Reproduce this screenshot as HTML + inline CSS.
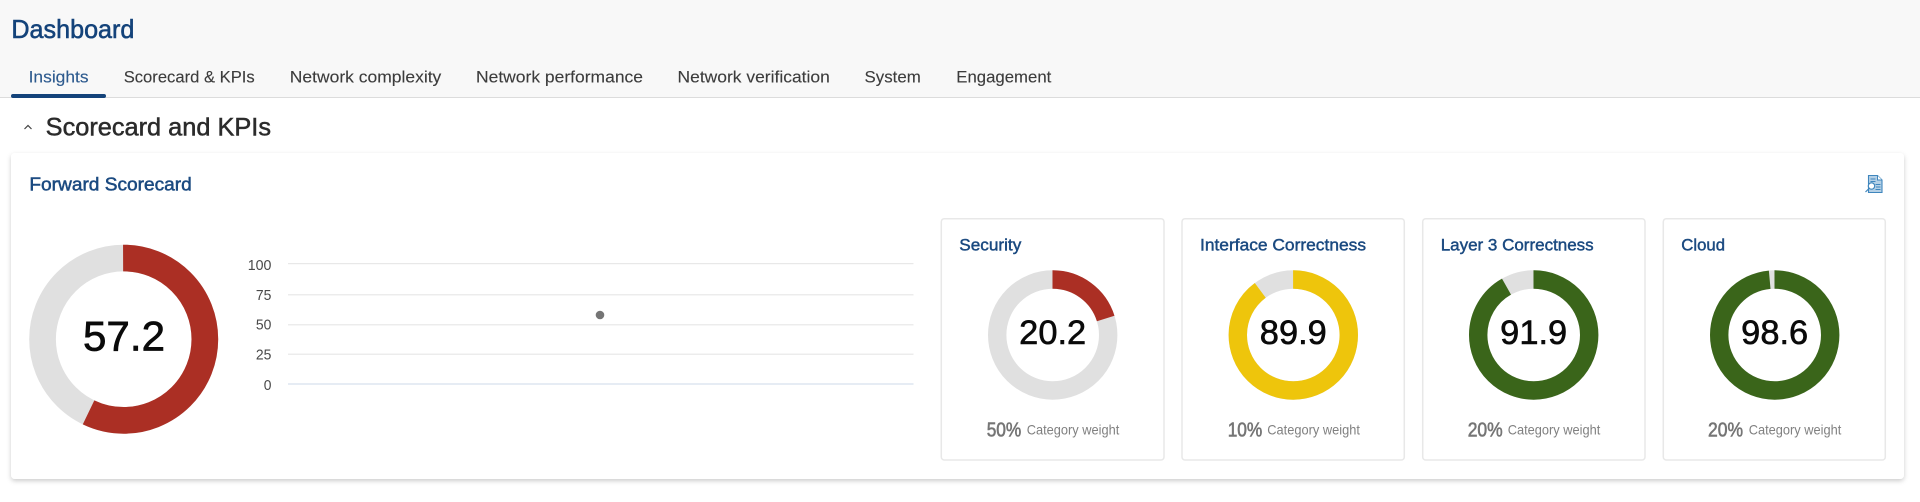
<!DOCTYPE html>
<html lang="en">
<head>
<meta charset="utf-8">
<title>Dashboard</title>
<style>
html,body{margin:0;padding:0;width:1920px;height:502px;overflow:hidden;background:#fff}
svg{display:block;position:absolute;left:0;top:0}
text{font-family:"Liberation Sans",sans-serif}
.tab{font-size:17px;fill:#3c3c3c;stroke:#3c3c3c;stroke-width:.12}
.title{font-size:17px;fill:#1b4a80;stroke:#1b4a80;stroke-width:.45}
.ax{font-size:15px;fill:#4a4a4a;text-anchor:end}
.pct{font-size:20px;fill:#757575;stroke:#757575;stroke-width:.6}
.cw{font-size:14px;fill:#808080}
.val{font-size:34px;fill:#0a0a0a;text-anchor:middle;stroke:#0a0a0a;stroke-width:.6}
.sub{fill:#fff;stroke:#e8e8e8;stroke-width:1.5}
</style>
</head>
<body>
<svg width="1920" height="502" viewBox="0 0 1920 502" xmlns="http://www.w3.org/2000/svg">
<defs>
<filter id="sh" x="-2%" y="-5%" width="104%" height="112%">
<feDropShadow dx="0" dy="2" stdDeviation="2.5" flood-color="#000" flood-opacity=".2"/>
</filter>
</defs>

<rect x="0" y="0" width="1920" height="97.5" fill="#f8f8f8"/>
<rect x="0" y="97" width="1920" height="1" fill="#dcdcdc"/>

<text x="11.4" y="38" font-size="26" fill="#14437a" textLength="123" lengthAdjust="spacingAndGlyphs" stroke="#14437a" stroke-width=".55">Dashboard</text>

<text class="tab" x="28.6" y="82.5" style="fill:#2d5a8e;stroke:#2d5a8e" textLength="60" lengthAdjust="spacingAndGlyphs">Insights</text>
<text class="tab" x="123.7" y="82.5" textLength="131" lengthAdjust="spacingAndGlyphs">Scorecard &amp; KPIs</text>
<text class="tab" x="289.8" y="82.5" textLength="151.5" lengthAdjust="spacingAndGlyphs">Network complexity</text>
<text class="tab" x="476" y="82.5" textLength="167" lengthAdjust="spacingAndGlyphs">Network performance</text>
<text class="tab" x="677.5" y="82.5" textLength="152.3" lengthAdjust="spacingAndGlyphs">Network verification</text>
<text class="tab" x="864.5" y="82.5" textLength="56.3" lengthAdjust="spacingAndGlyphs">System</text>
<text class="tab" x="956.3" y="82.5" textLength="95" lengthAdjust="spacingAndGlyphs">Engagement</text>
<rect x="11" y="94" width="95" height="4" rx="2" fill="#14437a"/>

<path d="M24.5 129 L28 125.5 L31.5 129" fill="none" stroke="#444" stroke-width="1.2"/>
<text x="45.7" y="135.7" font-size="25" fill="#2b2b2b" textLength="225.3" lengthAdjust="spacingAndGlyphs" stroke="#2b2b2b" stroke-width=".5">Scorecard and KPIs</text>

<rect x="11" y="153" width="1893" height="326" rx="4" fill="#fff" filter="url(#sh)"/>

<text x="29.4" y="190.7" font-size="18.5" fill="#1b4a80" textLength="162.4" lengthAdjust="spacingAndGlyphs" stroke="#1b4a80" stroke-width=".5">Forward Scorecard</text>

<!-- report icon -->
<path d="M1868.5 175.5 H1877.5 L1882 180 V192.5 H1868.5 Z" fill="#b4d0e6" stroke="#3f86bd" stroke-width="1.1"/>
<path d="M1877.5 175.5 V180 H1882" fill="#fff" stroke="#3f86bd" stroke-width="1"/>
<path d="M1870.5 179 H1875.5 M1870.5 181.5 H1875.5 M1875.5 184.5 H1880.5 M1876 187 H1880.5 M1875.5 189.5 H1880.5" stroke="#3f86bd" stroke-width="1.1"/>
<circle cx="1871.5" cy="186" r="3.2" fill="#fff" stroke="#3f86bd" stroke-width="1.2"/>
<path d="M1869 188.5 L1865.5 192" stroke="#3f86bd" stroke-width="1.2"/>

<!-- main donut -->
<circle cx="123.7" cy="339.2" r="81.15" fill="none" stroke="#e0e0e0" stroke-width="26.7"/>
<circle cx="123.7" cy="339.2" r="81.15" fill="none" stroke="#ab2f24" stroke-width="26.7" pathLength="100" stroke-dasharray="57.2 42.8" transform="rotate(-90 123.7 339.2)"/>
<text x="124" y="350.5" font-size="42" fill="#0a0a0a" text-anchor="middle" textLength="82" lengthAdjust="spacingAndGlyphs" stroke="#0a0a0a" stroke-width=".7">57.2</text>

<!-- chart -->
<rect x="288" y="263" width="625.5" height="1.2" fill="#e8e8e8"/>
<rect x="288" y="294.2" width="625.5" height="1.2" fill="#e8e8e8"/>
<rect x="288" y="324.2" width="625.5" height="1.2" fill="#e8e8e8"/>
<rect x="288" y="353.6" width="625.5" height="1.2" fill="#e8e8e8"/>
<rect x="288" y="383.4" width="625.5" height="1.2" fill="#d5dfec"/>
<text class="ax" x="271.4" y="270" textLength="23.7" lengthAdjust="spacingAndGlyphs">100</text>
<text class="ax" x="271.4" y="300" textLength="15.5" lengthAdjust="spacingAndGlyphs">75</text>
<text class="ax" x="271.4" y="329.5" textLength="15.5" lengthAdjust="spacingAndGlyphs">50</text>
<text class="ax" x="271.4" y="359.5" textLength="15.5" lengthAdjust="spacingAndGlyphs">25</text>
<text class="ax" x="271.4" y="390" textLength="7.7" lengthAdjust="spacingAndGlyphs">0</text>
<circle cx="600" cy="315" r="4.3" fill="#757575"/>

<!-- Security -->
<rect class="sub" x="941.3" y="218.7" width="222.7" height="241.3" rx="3"/>
<text class="title" x="959.3" y="250.7" textLength="62" lengthAdjust="spacingAndGlyphs">Security</text>
<circle cx="1052.7" cy="335" r="55.5" fill="none" stroke="#e0e0e0" stroke-width="18.4"/>
<circle cx="1052.7" cy="335" r="55.5" fill="none" stroke="#ab2f24" stroke-width="18.4" pathLength="100" stroke-dasharray="20.2 79.8" transform="rotate(-90 1052.7 335)"/>
<text class="val" x="1052.7" y="344" textLength="67" lengthAdjust="spacingAndGlyphs">20.2</text>
<text class="pct" x="986.7" y="436.7" textLength="34.6" lengthAdjust="spacingAndGlyphs">50%</text>
<text class="cw" x="1026.7" y="434.7" textLength="92.6" lengthAdjust="spacingAndGlyphs">Category weight</text>

<!-- Interface Correctness -->
<rect class="sub" x="1182" y="218.7" width="222.3" height="241.3" rx="3"/>
<text class="title" x="1200" y="250.7" textLength="166" lengthAdjust="spacingAndGlyphs">Interface Correctness</text>
<circle cx="1293.3" cy="335" r="55.5" fill="none" stroke="#e0e0e0" stroke-width="18.4"/>
<circle cx="1293.3" cy="335" r="55.5" fill="none" stroke="#eec50c" stroke-width="18.4" pathLength="100" stroke-dasharray="89.9 10.1" transform="rotate(-90 1293.3 335)"/>
<text class="val" x="1293.3" y="344" textLength="67" lengthAdjust="spacingAndGlyphs">89.9</text>
<text class="pct" x="1227.7" y="436.7" textLength="34.6" lengthAdjust="spacingAndGlyphs">10%</text>
<text class="cw" x="1267.3" y="434.7" textLength="92.6" lengthAdjust="spacingAndGlyphs">Category weight</text>

<!-- Layer 3 Correctness -->
<rect class="sub" x="1422.7" y="218.7" width="222.3" height="241.3" rx="3"/>
<text class="title" x="1440.7" y="250.7" textLength="153" lengthAdjust="spacingAndGlyphs">Layer 3 Correctness</text>
<circle cx="1533.7" cy="335" r="55.5" fill="none" stroke="#e0e0e0" stroke-width="18.4"/>
<circle cx="1533.7" cy="335" r="55.5" fill="none" stroke="#3a651a" stroke-width="18.4" pathLength="100" stroke-dasharray="91.9 8.1" transform="rotate(-90 1533.7 335)"/>
<text class="val" x="1533.7" y="344" textLength="67" lengthAdjust="spacingAndGlyphs">91.9</text>
<text class="pct" x="1467.7" y="436.7" textLength="35" lengthAdjust="spacingAndGlyphs">20%</text>
<text class="cw" x="1507.7" y="434.7" textLength="92.6" lengthAdjust="spacingAndGlyphs">Category weight</text>

<!-- Cloud -->
<rect class="sub" x="1663.3" y="218.7" width="222" height="241.3" rx="3"/>
<text class="title" x="1681.3" y="250.7" textLength="43.7" lengthAdjust="spacingAndGlyphs">Cloud</text>
<circle cx="1774.7" cy="335" r="55.5" fill="none" stroke="#e0e0e0" stroke-width="18.4"/>
<circle cx="1774.7" cy="335" r="55.5" fill="none" stroke="#3a651a" stroke-width="18.4" pathLength="100" stroke-dasharray="98.6 1.4" transform="rotate(-90 1774.7 335)"/>
<text class="val" x="1774.7" y="344" textLength="67" lengthAdjust="spacingAndGlyphs">98.6</text>
<text class="pct" x="1708" y="436.7" textLength="35" lengthAdjust="spacingAndGlyphs">20%</text>
<text class="cw" x="1748.7" y="434.7" textLength="92.6" lengthAdjust="spacingAndGlyphs">Category weight</text>
</svg>
</body>
</html>
